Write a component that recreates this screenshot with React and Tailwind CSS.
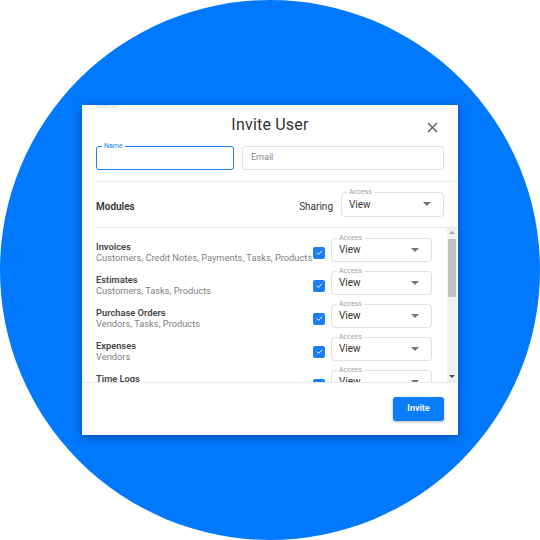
import React from "react";

const modules = [
    { name: "Invoices", deps: "Customers, Credit Notes, Payments, Tasks, Products" },
    { name: "Estimates", deps: "Customers, Tasks, Products" },
    { name: "Purchase Orders", deps: "Vendors, Tasks, Products" },
    { name: "Expenses", deps: "Vendors" },
    { name: "Time Logs", deps: "Projects" },
];

const Caret = () => (
    <svg width="8" height="4" viewBox="0 0 8 4" className="shrink-0">
        <path d="M0 0 L8 0 L4 4 Z" fill="#757575" />
    </svg>
);

const AccessSelect = ({ className = "" }) => (
    <div
        className={`relative flex items-center justify-between border border-[#e0e0e0] rounded-[4px] pl-[7px] pr-[12px] ${className}`}
    >
        <span className="absolute -top-[5px] left-[5px] bg-white px-[2px] text-[7px] leading-[8px] text-[#9e9e9e]">
            Access
        </span>
        <span className="text-[10px] text-[#333]">View</span>
        <Caret />
    </div>
);

const Checkbox = () => (
    <div className="w-[12px] h-[12px] rounded-[2px] bg-[#1a7ff5] flex items-center justify-center shrink-0">
        <svg width="9" height="9" viewBox="0 0 24 24" fill="none" stroke="white" strokeWidth="2.5">
            <path d="M5 12.5l4.5 4.5L19 7" />
        </svg>
    </div>
);

export default function App() {
    return (
        <div
            className="w-[540px] h-[540px] bg-white relative overflow-hidden"
            style={{ fontFamily: "Roboto, 'Open Sans', sans-serif" }}
        >
            {/* blue disc */}
            <div className="absolute inset-0 rounded-full bg-[#0079fe]" />

            <div className="relative w-full h-full flex items-center justify-center">
                {/* modal */}
                <div className="relative w-[376px] h-[330px] mt-[-1px] bg-white shadow-[0_2px_10px_rgba(0,0,0,0.35)] flex flex-col overflow-hidden">
                    <span className="absolute -top-[5px] left-[14px] text-[8px] text-[#d5d5d5]">Name</span>

                    {/* header */}
                    <div className="relative h-[41px] flex items-center justify-center">
                        <h2 className="text-[16px] text-[#333] tracking-[0.2px]">Invite User</h2>
                        <svg
                            className="absolute right-[20px] top-[17px]"
                            width="11"
                            height="11"
                            viewBox="0 0 11 11"
                            stroke="#666"
                            strokeWidth="1.5"
                        >
                            <path d="M1 1 L10 10 M10 1 L1 10" />
                        </svg>
                    </div>

                    {/* name / email */}
                    <div className="flex gap-[8px] px-[14px]">
                        <div className="relative w-[138px] h-[24px] border-[1.5px] border-[#1a7ff5] rounded-[3px]">
                            <span className="absolute -top-[5px] left-[5px] bg-white px-[2px] text-[7px] leading-[8px] text-[#1a7ff5]">
                                Name
                            </span>
                        </div>
                        <div className="flex-1 h-[24px] border border-[#e0e0e0] rounded-[3px] flex items-center pl-[8px]">
                            <span className="text-[9px] text-[#888]">Email</span>
                        </div>
                    </div>

                    <div className="ml-[14px] mt-[11px] border-t border-[#e8e8e8]" />

                    {/* modules header */}
                    <div className="h-[45px] flex items-center pl-[14px] pr-[14px]">
                        <span className="text-[10px] font-semibold text-[#333] mt-[4px]">Modules</span>
                        <span className="ml-auto mr-[8px] text-[10px] text-[#333] mt-[4px]">Sharing</span>
                        <AccessSelect className="w-[103px] h-[25px]" />
                    </div>

                    <div className="ml-[14px] border-t border-[#e8e8e8]" />

                    {/* list */}
                    <div className="relative h-[154px] overflow-hidden">
                        <div className="pt-[10px] pl-[14px] pr-[26px] flex flex-col gap-[9px]">
                            {modules.map((m) => (
                                <div key={m.name} className="flex h-[24px]">
                                    <div className="flex-1 pt-[3px] min-w-0">
                                        <div className="text-[9.3px] leading-[11px] font-semibold text-[#444]">
                                            {m.name}
                                        </div>
                                        <div className="text-[9.3px] leading-[11px] text-[#808080] whitespace-nowrap">
                                            {m.deps}
                                        </div>
                                    </div>
                                    <div className="pt-[9px] mr-[6px]">
                                        <Checkbox />
                                    </div>
                                    <AccessSelect className="w-[101px] h-[24px]" />
                                </div>
                            ))}
                        </div>

                        {/* scrollbar */}
                        <div className="absolute top-0 bottom-0 right-[1px] w-[10px] bg-[#f1f1f1] flex flex-col items-center">
                            <svg width="6" height="3" viewBox="0 0 6 3" className="mt-[3px]">
                                <path d="M0 3 L6 3 L3 0 Z" fill="#a3a3a3" />
                            </svg>
                            <div className="mt-[5px] w-[8px] h-[58px] bg-[#c1c1c1]" />
                            <svg width="6" height="3" viewBox="0 0 6 3" className="mt-auto mb-[4px]">
                                <path d="M0 0 L6 0 L3 3 Z" fill="#505050" />
                            </svg>
                        </div>
                    </div>

                    {/* footer */}
                    <div className="flex-1 border-t border-[#e8e8e8] flex items-center justify-end pr-[14px]">
                        <button className="w-[51px] h-[24px] rounded-[3px] bg-[#0a7dfc] text-white text-[9px] font-semibold shadow-[0_1px_3px_rgba(0,0,0,0.3)]">
                            Invite
                        </button>
                    </div>
                </div>
            </div>
        </div>
    );
}
